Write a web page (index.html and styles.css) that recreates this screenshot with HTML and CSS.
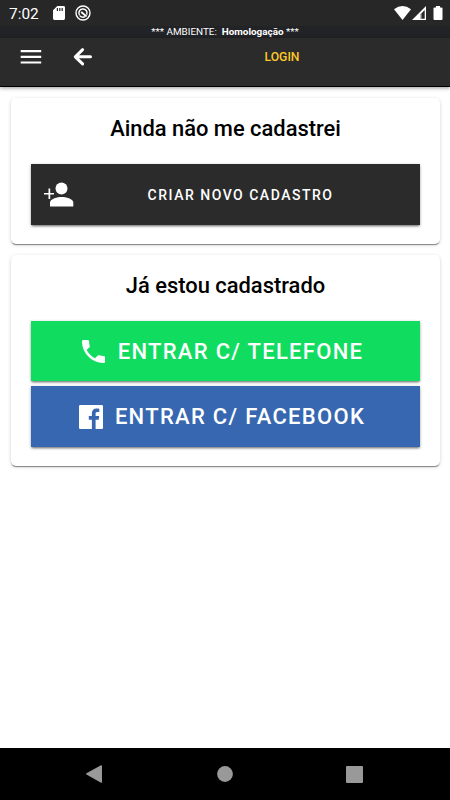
FILE: index.html
```html
<!DOCTYPE html>
<html lang="pt-BR">

<head>
    <meta charset="UTF-8">
    <meta name="viewport" content="width=device-width, initial-scale=1.0">
    <title>Login</title>
    <link rel="stylesheet" href="styles.css">
</head>

<body>
    <div class="status-bar">
        <span class="hora">7:02</span>
        <svg class="icone-sd" width="12" height="14" viewBox="0 0 12 14">
            <path fill="#fff" fill-rule="evenodd" d="M4.3 0H10.6Q12 0 12 1.4V12.6Q12 14 10.6 14H1.4Q0 14 0 12.6V4.3ZM3.8 2V5H5V2ZM6.2 2V5H7.4V2ZM8.6 2V5H9.8V2Z"/>
        </svg>
        <svg class="icone-sync" width="16" height="16" viewBox="0 0 16 16" fill="none" stroke="#fff">
            <circle cx="8" cy="8" r="7" stroke-width="1.4"/>
            <path stroke-width="1.5" d="M4.6 10.4A4.1 4.1 0 1 1 11.7 9.6M4.8 10.8Q7 13 10 11.8"/>
            <path stroke-width="1.9" d="M6.2 7L11.6 11.4"/>
        </svg>
        <div class="sinais">
            <svg width="17" height="14" viewBox="0 0 17 14">
                <path fill="#fff" d="M0 3.2Q8.5-3 17 3.2L8.5 14Z"/>
            </svg>
            <svg width="14" height="14" viewBox="0 0 14 14">
                <path fill="#fff" fill-rule="evenodd" d="M14 0V14H0ZM12.7 4L8 8.700V12.700H12.700Z"/>
                <path fill="#fff" d="M8 8.700L9.500 7.200V12.700H8Z" opacity=".7"/>
            </svg>
            <svg class="bateria" width="10" height="14" viewBox="0 0 10 14">
                <path fill="#fff" d="M3 0H7V1.5H8.6Q9.5 1.5 9.5 2.4V13Q9.5 14 8.6 14H1.4Q.5 14 .5 13V2.4Q.5 1.5 1.4 1.5H3Z"/>
            </svg>
        </div>
    </div>
    <div class="ambiente">*** AMBIENTE: &nbsp;<b>Homologação</b> ***</div>

    <header class="toolbar">
        <svg class="menu" width="22" height="16" viewBox="0 0 22 16">
            <path stroke="#fff" stroke-width="2.2" d="M.7 2.2H21.2M.7 7.9H21.2M.7 13.5H21.2"/>
        </svg>
        <svg class="voltar" width="20" height="20" viewBox="0 0 20 20">
            <path fill="none" stroke="#fff" stroke-width="3" stroke-linecap="round" stroke-linejoin="round" d="M9.6 2.7L2.3 9.8L9.6 16.9M2.8 9.8H17.5"/>
        </svg>
        <span class="titulo">LOGIN</span>
    </header>

    <main class="conteudo">
        <section class="card">
            <h2>Ainda não me cadastrei</h2>
            <button class="btn btn-novo">
                <svg width="30" height="25" viewBox="0 0 30 25">
                    <g fill="#fff">
                        <circle cx="17.5" cy="6.5" r="6"/>
                        <path d="M6 24.5V20.5C6 16.8 13.6 15 17.7 15S29.3 16.8 29.3 20.5V24.5Z"/>
                        <path d="M4.5 6.5H6.2V11H10V12.6H6.2V17.1H4.5V12.6H0V11H4.5Z"/>
                    </g>
                </svg>
                <span>CRIAR NOVO CADASTRO</span>
            </button>
        </section>

        <section class="card">
            <h2>Já estou cadastrado</h2>
            <button class="btn btn-telefone">
                <svg width="23" height="23" viewBox="3 3 18 18">
                    <path fill="#fff" d="M6.62 10.79c1.44 2.83 3.76 5.14 6.59 6.59l2.2-2.2c.27-.27.67-.36 1.02-.24 1.12.37 2.33.57 3.57.57.55 0 1 .45 1 1V20c0 .55-.45 1-1 1-9.39 0-17-7.61-17-17 0-.55.45-1 1-1h3.5c.55 0 1 .45 1 1 0 1.25.2 2.45.57 3.57.11.35.03.74-.25 1.02z"/>
                </svg>
                <span>ENTRAR C/ TELEFONE</span>
            </button>
            <button class="btn btn-facebook">
                <svg width="24" height="24" viewBox="0 0 24 24">
                    <path fill="#fff" d="M1.3 0H22.7Q24 0 24 1.3V22.7Q24 24 22.7 24H16.6V14.7H19.7L20.2 11.1H16.6V8.8C16.6 7.7 16.9 7 18.4 7H20.3V3.8C20 3.7 18.8 3.6 17.5 3.6C14.8 3.6 12.9 5.3 12.9 8.4V11.1H9.8V14.7H12.9V24H1.3Q0 24 0 22.7V1.3Q0 0 1.3 0Z"/>
                </svg>
                <span>ENTRAR C/ FACEBOOK</span>
            </button>
        </section>
    </main>

    <nav class="nav-bar">
        <svg width="17" height="18" viewBox="0 0 17 18">
            <path fill="#999" d="M.5 8.3L15 .2Q16 0 16 1V17Q16 18 15 17.7L.5 9.5Q-.2 8.9.5 8.3Z"/>
        </svg>
        <svg width="16" height="16" viewBox="0 0 16 16">
            <circle cx="8" cy="8" r="7.9" fill="#999"/>
        </svg>
        <svg width="17" height="17" viewBox="0 0 17 17">
            <rect width="17" height="17" rx="1" fill="#999"/>
        </svg>
    </nav>
</body>

</html>
```
FILE: styles.css
```css
* {
    box-sizing: border-box;
}

body {
    margin: 0;
    height: 100vh;
    display: flex;
    flex-direction: column;
    overflow: hidden;
    background: #fff;
    font-family: Roboto, "Liberation Sans", sans-serif;
}

svg {
    display: block;
    flex: none;
}

.status-bar {
    height: 26px;
    padding: 0 7px 0 9px;
    display: flex;
    align-items: center;
    background: #272727;
    color: #fff;
}

.hora {
    width: 44px;
    padding-top: 1px;
    font-size: 15.4px;
}

.icone-sync {
    margin-left: 10px;
}

.sinais {
    display: flex;
    gap: 1px;
    margin-left: auto;
}

.bateria {
    margin-left: 6px;
}

.ambiente {
    height: 12px;
    background: #222327;
    color: #fff;
    font-size: 9.9px;
    line-height: 12px;
    text-align: center;
    white-space: nowrap;
}

.toolbar {
    height: 49px;
    padding: 0 20px 10px;
    display: flex;
    align-items: center;
    background: #2b2b2b;
    border-bottom: 1px solid #000;
    box-shadow: 0 1px 4px rgba(0, 0, 0, 0.4);
}

.voltar {
    margin-left: 31px;
}

.titulo {
    flex: 1;
    padding-left: 41px;
    color: #fcc828;
    font-size: 12.2px;
    font-weight: 500;
    text-align: center;
}

.conteudo {
    flex: 1;
    padding: 11px 10px 0 11px;
}

.card {
    margin-bottom: 11px;
    padding: 18px 20px 19px;
    border-radius: 5px;
    background: #fff;
    box-shadow: 0 2px 1px -1px rgba(0, 0, 0, 0.3), 0 1px 1px rgba(0, 0, 0, 0.2), 0 1px 4px rgba(0, 0, 0, 0.14);
}

h2 {
    margin: 0 0 23px;
    font-size: 21.9px;
    font-weight: 500;
    line-height: 25px;
    text-align: center;
}

.btn {
    width: 100%;
    height: 60.6px;
    display: flex;
    align-items: center;
    justify-content: center;
    border: none;
    padding: 0;
    color: #fff;
    font-family: inherit;
    font-size: 22px;
    font-weight: 500;
    letter-spacing: 1.3px;
    box-shadow: 0 2px 2px -1px rgba(0, 0, 0, 0.4), 0 1px 3px rgba(0, 0, 0, 0.3);
}

.btn-novo {
    padding: 1px 13px 0;
    background: #2b2b2b;
    font-size: 14px;
    letter-spacing: 1.5px;
}

.btn-novo span {
    flex: 1;
}

.btn-telefone {
    gap: 13px;
    margin-bottom: 5px;
    padding: 1px 6px 0 0;
    background: #10dc60;
}

.btn-facebook {
    gap: 12px;
    padding: 1px 7px 0 0;
    background: #3767b1;
}

.nav-bar {
    height: 52px;
    padding: 0 87px 0 86px;
    display: flex;
    align-items: center;
    justify-content: space-between;
    background: #000;
}
```
